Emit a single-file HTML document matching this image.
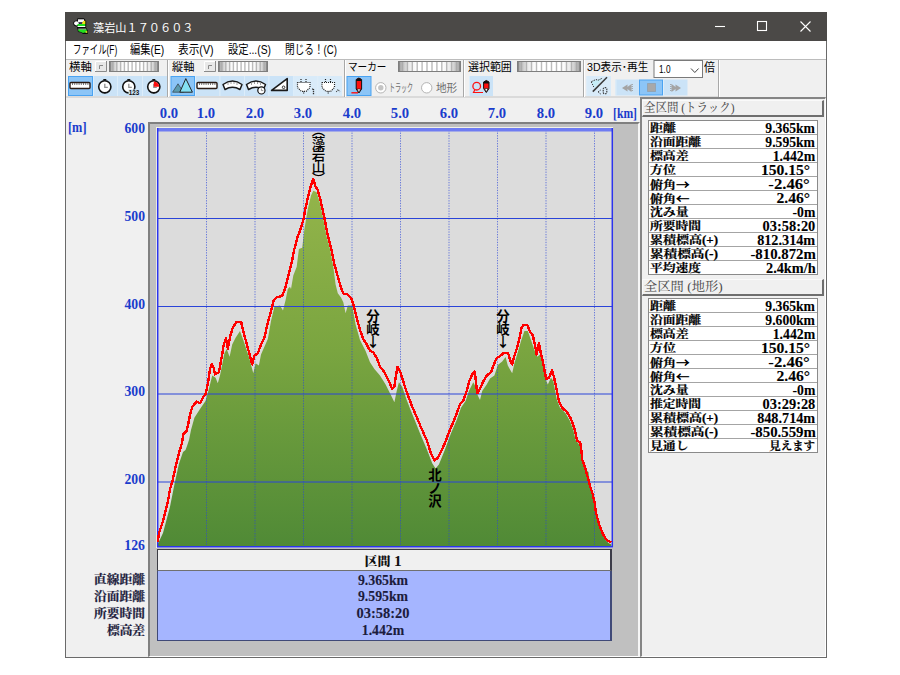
<!DOCTYPE html>
<html lang="ja">
<head>
<meta charset="utf-8">
<title>藻岩山１７０６０３</title>
<style>
html,body{margin:0;padding:0;background:#fff;}
body{width:900px;height:675px;position:relative;overflow:hidden;font-family:"Liberation Sans","Noto Sans CJK JP",sans-serif;}
div,span{box-sizing:border-box;}
.abs{position:absolute;}
#win{position:absolute;left:65px;top:12px;width:762px;height:646px;background:#f0f0f0;border:1px solid #6a6a6a;border-top:none;}
#title{position:absolute;left:65px;top:12px;width:762px;height:29px;background:#4b4947;color:#fff;}
#title .t{left:28px;top:7.500px;font-size:11px;line-height:16px;}
#menu{position:absolute;left:66px;top:41px;width:760px;height:19px;background:#fff;border-bottom:1px solid #bcbcbc;font-size:12px;line-height:18px;color:#000;}
#menu span{top:0;}
.f{position:absolute;display:inline-block;white-space:nowrap;transform-origin:0 50%;}
.f.r{transform-origin:100% 50%;}
.f.c{transform-origin:50% 50%;}
.glabel{top:60px;font-size:11px;line-height:14px;color:#000;}
.ser{font-family:"Liberation Serif","Noto Serif CJK JP","Noto Serif CJK SC",serif;font-weight:bold;}
.ax{color:#1a3ccc;font-size:14px;line-height:14px;}
#frame{position:absolute;left:148px;top:122px;width:492px;height:535px;background:#c0c0c0;border-left:2px solid #808080;border-top:2px solid #808080;border-right:2px solid #f6f6f6;border-bottom:1px solid #fff;}
#plot{position:absolute;left:155.500px;top:126.800px;width:457.500px;height:421.200px;background:#dcdcdc;border-top:1.200px solid #f2f2e6;border-left:1.500px solid #f2f2e6;}
#kukan{position:absolute;left:156.500px;top:548.500px;width:455.200px;height:22.500px;background:#f0f0f0;border-top:1.500px solid #3c3c44;border-left:1.500px solid #3c3c44;border-right:2px solid #3c3c48;border-bottom:1px solid #707070;}
#blue{position:absolute;left:156.500px;top:571px;width:455.200px;height:69.500px;background:#a5b5ff;border-left:1.500px solid #404a78;border-right:2px solid #404a78;border-bottom:1.500px solid #404a78;}
.bv{left:383.300px;-webkit-text-stroke:0.100px #1c1c3c;font-size:14px;line-height:16px;color:#1c1c3c;}
.bl{right:754.500px;-webkit-text-stroke:0.220px #1c1c3c;font-weight:700;font-size:12px;line-height:16px;color:#1c1c3c;}
#rp{position:absolute;left:640px;top:97px;width:186px;height:560px;border-left:2px solid #858585;border-top:2px solid #858585;border-right:1.500px solid #fff;border-bottom:1.500px solid #fff;}
.hd{position:absolute;left:642px;width:182px;height:17px;background:#f0f0f0;border-top:1px solid #fafafa;border-left:1px solid #fafafa;border-right:2px solid #6e6e6e;border-bottom:2px solid #6e6e6e;}
.hdt{left:643.500px;font-family:"Liberation Serif","Noto Serif CJK JP","Noto Serif CJK SC",serif;font-size:12.500px;line-height:15px;color:#4a4a4a;}
.tb{position:absolute;left:648px;width:170px;height:155px;border:1px solid #8a8a8a;background:#fff;}
.tb i{display:block;height:14px;border-bottom:1px solid #a4a4a4;box-sizing:border-box;}
.cj{font-family:"Noto Serif CJK JP","Noto Serif CJK SC",serif;-webkit-text-stroke:0.600px #000;}
.tk{left:649.600px;-webkit-text-stroke:0.220px #000;font-weight:700;font-size:11.500px;line-height:16px;color:#000;}
.tv{right:84.600px;-webkit-text-stroke:0.100px #000;font-size:14px;line-height:16px;color:#000;}
.ar{font-family:"Noto Sans CJK JP","Liberation Sans",sans-serif;}
.lbl{font-family:"Liberation Sans","Noto Sans CJK JP",sans-serif;font-weight:bold;font-size:13.500px;fill:#000;}
</style>
</head>
<body>
<div id="win"></div>
<div id="title">
<svg class="abs" style="left:7px;top:5px" width="18" height="18" viewBox="72 17 18 18"><path d="M77.500 18.300L84 18.300L86.200 21V28.200H77V26.600Q73 26 73.200 23Q73.500 20.400 77 20.400Z" fill="#0a0a0a"/><ellipse cx="76.400" cy="23.300" rx="2.300" ry="2.100" fill="#fff"/><rect x="78" y="19.300" width="6" height="3" fill="#f4f4f4"/><path d="M83 21.300L85.300 20.500V24H81.800Z" fill="#f0e010"/><path d="M79.500 22.500h2.500v1.500h-2.500z" fill="#303060"/><rect x="77.500" y="24" width="7.800" height="2.100" fill="#20e020"/><rect x="77.500" y="26" width="7.800" height="1" fill="#f4fff4"/><path d="M77.300 28H86.500L88 31V33.900L83 33.900L81 32.600L78 32Z" fill="#0a0a0a"/><rect x="78.300" y="28.700" width="7.900" height="0.900" fill="#f4fff4"/><path d="M78.300 29.600H86.500L87 31.300V33L85 32.500L83 33L81 32L78.300 31.300Z" fill="#20e020"/><path d="M85.500 31H87.300V33.200L85.500 32.500Z" fill="#c8d020"/></svg>
<span class="t f" style="transform:scaleX(1.0152)">藻岩山１７０６０３</span>
<svg class="abs" style="left:640px;top:0" width="122" height="29" viewBox="0 0 122 29"><g stroke="#fff" stroke-width="1.1" fill="none"><path d="M10 14.5h10"/><rect x="52.5" y="9.5" width="9" height="9"/><path d="M95.500 9.500l10 10M105.500 9.500l-10 10"/></g></svg>
</div>
<div id="menu">
<span class="f" style="left:6.500px;transform:scaleX(0.6980)">ファイル(F)</span>
<span class="f" style="left:63.700px;transform:scaleX(0.8575)">編集(E)</span>
<span class="f" style="left:112.400px;transform:scaleX(0.8900)">表示(V)</span>
<span class="f" style="left:162px;transform:scaleX(0.8600)">設定...(S)</span>
<span class="f" style="left:219px;transform:scaleX(0.8041)">閉じる！(C)</span>
</div>

<!-- toolbar groups -->
<svg class="abs" style="left:0;top:0" width="900" height="100" viewBox="0 0 900 100">
<defs><linearGradient id="gr" x1="0" y1="0" x2="1" y2="0"><stop offset="0" stop-color="#808080"/><stop offset="0.040" stop-color="#b0b0b0"/><stop offset="0.160" stop-color="#e8e8e8"/><stop offset="0.300" stop-color="#ffffff"/><stop offset="0.700" stop-color="#ffffff"/><stop offset="0.840" stop-color="#e8e8e8"/><stop offset="0.960" stop-color="#b0b0b0"/><stop offset="1" stop-color="#808080"/></linearGradient></defs>
<path d="M66 97H718" stroke="#c4c4c4"/>
<path d="M167.5 60V97" stroke="#a8a8a8"/><path d="M168.5 60V97" stroke="#fff"/>
<path d="M344.5 60V97" stroke="#a8a8a8"/><path d="M345.5 60V97" stroke="#fff"/>
<path d="M463.5 60V97" stroke="#a8a8a8"/><path d="M464.5 60V97" stroke="#fff"/>
<path d="M583.5 60V97" stroke="#a8a8a8"/><path d="M584.5 60V97" stroke="#fff"/>
<path d="M718.5 60V97" stroke="#a8a8a8"/><path d="M719.5 60V97" stroke="#fff"/>
<rect x="95" y="61" width="12" height="11" fill="#e8e8e8"/><path d="M95.5 72V61.5H107" stroke="#fff" fill="none"/><path d="M106.5 61V71.500H95" stroke="#8a8a8a" fill="none"/><path d="M99.5 69V65.500H103" stroke="#8a8a8a" fill="none"/>
<rect x="109" y="61" width="50" height="11" fill="url(#gr)" stroke="none"/><path d="M112.9 62V71M116.8 62V71M120.6 62V71M124.4 62V71M128.2 62V71M132.1 62V71M135.9 62V71M139.8 62V71M143.6 62V71M147.4 62V71M151.2 62V71M155.1 62V71" stroke="#a4a4a4" stroke-width="1.400" fill="none" opacity="0.750"/><rect x="109.5" y="61.5" width="49" height="10" fill="none" stroke="#7e7e7e" stroke-width="1"/><path d="M110.5 62V71M157.5 62V71" stroke="#8a8a8a" stroke-width="1"/>
<rect x="204" y="61" width="12" height="11" fill="#e8e8e8"/><path d="M204.5 72V61.5H216" stroke="#fff" fill="none"/><path d="M215.5 61V71.500H204" stroke="#8a8a8a" fill="none"/><path d="M208.5 69V65.500H212" stroke="#8a8a8a" fill="none"/>
<rect x="218" y="61" width="50" height="11" fill="url(#gr)" stroke="none"/><path d="M221.9 62V71M225.8 62V71M229.6 62V71M233.4 62V71M237.2 62V71M241.1 62V71M244.9 62V71M248.8 62V71M252.6 62V71M256.4 62V71M260.2 62V71M264.1 62V71" stroke="#a4a4a4" stroke-width="1.400" fill="none" opacity="0.750"/><rect x="218.5" y="61.5" width="49" height="10" fill="none" stroke="#7e7e7e" stroke-width="1"/><path d="M219.5 62V71M266.5 62V71" stroke="#8a8a8a" stroke-width="1"/>
<rect x="398" y="61" width="63" height="11" fill="url(#gr)" stroke="none"/><path d="M402.5 62V71M407.4 62V71M412.3 62V71M417.2 62V71M422.1 62V71M427.0 62V71M432.0 62V71M436.9 62V71M441.8 62V71M446.7 62V71M451.6 62V71M456.5 62V71" stroke="#a4a4a4" stroke-width="1.400" fill="none" opacity="0.750"/><rect x="398.5" y="61.5" width="62" height="10" fill="none" stroke="#7e7e7e" stroke-width="1"/><path d="M399.5 62V71M459.5 62V71" stroke="#8a8a8a" stroke-width="1"/>
<rect x="517" y="61" width="64" height="11" fill="url(#gr)" stroke="none"/><path d="M521.5 62V71M526.5 62V71M531.5 62V71M536.5 62V71M541.5 62V71M546.5 62V71M551.5 62V71M556.5 62V71M561.5 62V71M566.5 62V71M571.5 62V71M576.5 62V71" stroke="#a4a4a4" stroke-width="1.400" fill="none" opacity="0.750"/><rect x="517.5" y="61.5" width="63" height="10" fill="none" stroke="#7e7e7e" stroke-width="1"/><path d="M518.5 62V71M579.5 62V71" stroke="#8a8a8a" stroke-width="1"/>
<rect x="68.5" y="76.5" width="24" height="19" fill="#8cc5f7" stroke="#4aa3f2"/>
<rect x="93" y="76" width="24" height="20" fill="#cbe3f7"/><path d="M93.5 76V96" stroke="#dcedfa"/>
<rect x="117" y="76" width="25" height="20" fill="#cbe3f7"/><path d="M117.5 76V96" stroke="#dcedfa"/>
<rect x="142" y="76" width="25" height="20" fill="#cbe3f7"/><path d="M142.5 76V96" stroke="#dcedfa"/>
<rect x="70" y="82.500" width="20" height="6" rx="1" fill="#fff" stroke="#2a1a14" stroke-width="1.400"/><path d="M72.5 83V85M74.7 83V85M76.9 83V85M79.1 83V85M81.3 83V85M83.5 83V85M85.7 83V85M87.9 83V85" stroke="#555" stroke-width="0.800"/>
<path d="M103.3 79.0h3v1.500h-3z" fill="#111"/><circle cx="104.8" cy="86.8" r="6.100" fill="#fff" stroke="#111" stroke-width="1.600"/><path d="M104.8 83.8V87.3H107.8" stroke="#909090" stroke-width="1.300" fill="none"/><path d="M103.8 92.69999999999999h2" stroke="#111" stroke-width="1.200"/>
<path d="M127.30000000000001 79.0h3v1.500h-3z" fill="#111"/><circle cx="128.8" cy="86.8" r="6.100" fill="#fff" stroke="#111" stroke-width="1.600"/><path d="M128.8 83.8V87.3H131.8" stroke="#909090" stroke-width="1.300" fill="none"/><path d="M127.80000000000001 92.69999999999999h2" stroke="#111" stroke-width="1.200"/>
<path d="M152.3 79.0h3v1.500h-3z" fill="#111"/><circle cx="153.8" cy="86.8" r="6.100" fill="#fff" stroke="#111" stroke-width="1.600"/><path d="M153.8 83.8V87.3H156.8" stroke="#909090" stroke-width="1.300" fill="none"/><path d="M152.8 92.69999999999999h2" stroke="#111" stroke-width="1.200"/>
<rect x="128.500" y="89.500" width="11" height="5.800" fill="#cbe3f7"/><text x="139.300" y="95" text-anchor="end" font-family="Liberation Sans,sans-serif" font-weight="bold" font-size="7.500" fill="#111" textLength="10.500" lengthAdjust="spacingAndGlyphs">123</text>
<path d="M153.800 86.800V81.400A5.400 5.400 0 0 1 159.200 86.800Z" fill="#ff1010"/>
<rect x="171.0" y="76.5" width="23.5" height="19" fill="#8cc5f7" stroke="#4aa3f2"/>
<rect x="195" y="76" width="24.5" height="20" fill="#cbe3f7"/><path d="M195.5 76V96" stroke="#dcedfa"/>
<rect x="219.5" y="76" width="24.5" height="20" fill="#cbe3f7"/><path d="M220.0 76V96" stroke="#dcedfa"/>
<rect x="244" y="76" width="24.5" height="20" fill="#cbe3f7"/><path d="M244.5 76V96" stroke="#dcedfa"/>
<rect x="268.5" y="76" width="24.5" height="20" fill="#cbe3f7"/><path d="M269.0 76V96" stroke="#dcedfa"/>
<rect x="293" y="76" width="24.5" height="20" fill="#d9ebf9"/><path d="M293.5 76V96" stroke="#dcedfa"/>
<rect x="317.5" y="76" width="24.5" height="20" fill="#d9ebf9"/><path d="M318.0 76V96" stroke="#dcedfa"/>
<path d="M172.600 92.200L178 83.800L183.500 92.200Z" fill="#5c9cb0" stroke="#3a4a55" stroke-width="0.800"/><path d="M179.800 92.200L185.800 78.600L192.400 92.200Z" fill="#84e0f2" stroke="#222" stroke-width="1"/>
<rect x="197" y="82.500" width="20" height="6" rx="1" fill="#fff" stroke="#2a1a14" stroke-width="1.400"/><path d="M199.5 83V85M201.7 83V85M203.9 83V85M206.1 83V85M208.3 83V85M210.5 83V85M212.7 83V85M214.9 83V85" stroke="#555" stroke-width="0.800"/>
<path d="M223 84.5Q232.5 77.5 242 84.5L240 89.5Q232.5 85 225 89.5Z" fill="#fff" stroke="#1a1a1a" stroke-width="1.500" stroke-linejoin="round"/><path d="M228 83v2M231 82v2M234 82v2M237 83v2" stroke="#888" stroke-width="0.800"/>
<path d="M246.5 84.5Q256.0 77.5 265.5 84.5L263.5 89.5Q256.0 85 248.5 89.5Z" fill="#fff" stroke="#1a1a1a" stroke-width="1.500" stroke-linejoin="round"/><path d="M251.5 83v2M254.5 82v2M257.5 82v2M260.5 83v2" stroke="#888" stroke-width="0.800"/>
<circle cx="261.400" cy="90.400" r="3.600" fill="#fff" stroke="#111" stroke-width="1.200"/><path d="M261.400 88.500V90.600H263.300" stroke="#888" stroke-width="0.900" fill="none"/>
<path d="M271.600 90.400H287.200V78.600Z" fill="#fff" stroke="#1a1a1a" stroke-width="1.600" stroke-linejoin="round"/><circle cx="283.600" cy="87.300" r="1.300" fill="#fff" stroke="#222" stroke-width="0.900"/>
<path d="M301.0 79v3.500M306.0 79v3.500" stroke="#222" stroke-width="1.200" stroke-dasharray="1 1"/><path d="M297.5 82.500h12.500v5l-3.800 3.800h-4.900L297.5 87.500z" fill="#fff" stroke="#222" stroke-width="1.200" stroke-dasharray="1 1"/><path d="M303.7 91.500v2.500" stroke="#222" stroke-width="1.200" stroke-dasharray="1 1"/>
<path d="M325.5 79v3.500M330.5 79v3.500" stroke="#222" stroke-width="1.200" stroke-dasharray="1 1"/><path d="M322 82.500h12.500v5l-3.800 3.800h-4.900L322 87.500z" fill="#fff" stroke="#222" stroke-width="1.200" stroke-dasharray="1 1"/><path d="M328.2 91.500v2.500" stroke="#222" stroke-width="1.200" stroke-dasharray="1 1"/>
<path d="M312.300 89.500l1.200-1V94.500" fill="none" stroke="#333" stroke-width="1.300" stroke-dasharray="1.200 0.800"/><path d="M336.300 92l1.800-2.600l1.800 2.600" stroke="#444" stroke-width="1.100" fill="none" stroke-dasharray="1 1"/>
<rect x="347.0" y="76.5" width="24" height="19" fill="#8cc5f7" stroke="#4aa3f2"/>
<path d="M356.2 79.5V89L358.9 93L361.59999999999997 89V79.5Q358.9 76.5 356.2 79.5Z" fill="#ff1010" stroke="#111" stroke-width="1"/><path d="M356.2 80Q358.9 76.5 361.59999999999997 80V81H356.2Z" fill="#111"/><path d="M357.2 89L358.9 92.5L360.59999999999997 89Z" fill="#fff" stroke="#111" stroke-width="0.600"/>
<path d="M351.400 92.800H358" stroke="#ff1010" stroke-width="1.400"/>
<circle cx="380.800" cy="87.800" r="5.200" fill="#fff" stroke="#b4b4b4" stroke-width="1"/><circle cx="380.800" cy="87.800" r="2.700" fill="#c4c4c4"/>
<circle cx="426.700" cy="87.800" r="5.200" fill="#fff" stroke="#b4b4b4" stroke-width="1"/>
<rect x="469" y="76" width="24" height="20" fill="#cbe3f7"/><path d="M469.5 76V96" stroke="#dcedfa"/>
<circle cx="476.700" cy="86.200" r="3.800" fill="none" stroke="#ff1010" stroke-width="1.300"/><path d="M475 89.500L473.500 92.500H483" fill="none" stroke="#ff1010" stroke-width="1.200"/>
<path d="M483.6 82.0V88.5L486.3 92.5L489.0 88.5V82.0Q486.3 79.0 483.6 82.0Z" fill="#ff1010" stroke="#111" stroke-width="1"/><path d="M483.6 82.5Q486.3 79.0 489.0 82.5V83.5H483.6Z" fill="#111"/><path d="M484.6 88.5L486.3 92.0L488.0 88.5Z" fill="#fff" stroke="#111" stroke-width="0.600"/>
<rect x="586.5" y="76" width="24.5" height="20" fill="#d9ebf9"/><path d="M587.0 76V96" stroke="#dcedfa"/>
<path d="M591.300 81.700L602.700 78.300L594.500 88Z" fill="#c6eef8"/><path d="M591.300 81.700L596 79.500L598 80.300L602.700 78" stroke="#333" stroke-width="1" fill="none" stroke-dasharray="1.500 1"/><path d="M591.300 82L594 87.500" stroke="#444" stroke-width="1" stroke-dasharray="1.200 1"/><path d="M592.800 91.600L607 77.300" stroke="#3a3a3a" stroke-width="1.500"/><path d="M600.700 90l-2.800 2l2.800 2" stroke="#333" stroke-width="1" fill="none" stroke-dasharray="1.200 0.800"/><rect x="603.200" y="87.600" width="3.600" height="6.200" rx="1.500" fill="none" stroke="#333" stroke-width="1.100" stroke-dasharray="1.500 0.800"/>
<rect x="615.5" y="79.5" width="23.5" height="16" fill="#cbe3f7"/><path d="M616.0 79.5V95.5" stroke="#dcedfa"/>
<rect x="639.5" y="80.0" width="23" height="15" fill="#8cc5f7" stroke="#4aa3f2"/>
<rect x="663" y="79.5" width="24.5" height="16" fill="#cbe3f7"/><path d="M663.5 79.5V95.5" stroke="#dcedfa"/>
<path d="M622 88L627.500 84.500V91.500Z" fill="#a4a4a4"/><path d="M626 88L631.500 84V92Z" fill="#a4a4a4"/><path d="M632.200 84V92" stroke="#9a9a9a" stroke-width="1.200" stroke-dasharray="1 1"/>
<rect x="647.500" y="83.500" width="8" height="8" fill="#a8a8a8" stroke="#888" stroke-width="0.800" stroke-dasharray="1 1"/>
<path d="M681 88L675.500 84.500V91.500Z" fill="#a4a4a4"/><path d="M677 88L671.500 84V92Z" fill="#a4a4a4"/><path d="M670.800 84V92" stroke="#9a9a9a" stroke-width="1.200" stroke-dasharray="1 1"/>
<rect x="654" y="60.500" width="48.500" height="17" fill="#fff" stroke="#7a7a7a"/><path d="M691 68.500l3.800 4l3.800-4" fill="none" stroke="#444" stroke-width="1"/>
</svg>
<span class="glabel f" style="left:69.400px;transform:scaleX(1.0364)">横軸</span>
<span class="glabel f" style="left:172px;transform:scaleX(1.0227)">縦軸</span>
<span class="glabel f" style="left:347.800px;transform:scaleX(0.8727)">マーカー</span>
<span class="glabel f" style="left:468px;transform:scaleX(0.9955)">選択範囲</span>
<span class="glabel f" style="left:587px;transform:scaleX(0.9644)">3D表示･再生</span>
<span class="glabel f" style="left:704px;top:61px;font-size:12px;transform:scaleX(0.9155)">倍</span>
<span class="glabel f" style="left:659px;top:62px;transform:scaleX(0.7518)">1.0</span>
<span class="glabel f" style="left:389.200px;top:81px;color:#6d6d6d;transform:scaleX(0.5455)">トラック</span>
<span class="glabel f" style="left:435.500px;top:81px;color:#6d6d6d;transform:scaleX(0.9636)">地形</span>

<!-- axis labels -->
<span class="ax ser f" style="left:68px;top:120.800px;transform:scaleX(0.8810)">[m]</span>
<span class="ax ser f" style="left:612.800px;top:107px;transform:scaleX(0.8339)">[km]</span>
<span class="ax ser f r" style="right:755.0px;top:121.500px;transform:scaleX(0.9762)">600</span>
<span class="ax ser f r" style="right:755.0px;top:209.5px;transform:scaleX(0.9762)">500</span>
<span class="ax ser f r" style="right:755.0px;top:297.5px;transform:scaleX(0.9762)">400</span>
<span class="ax ser f r" style="right:755.0px;top:385.0px;transform:scaleX(0.9762)">300</span>
<span class="ax ser f r" style="right:755.0px;top:473.0px;transform:scaleX(0.9762)">200</span>
<span class="ax ser f r" style="right:755.0px;top:538.500px;transform:scaleX(0.9857)">126</span>
<span class="ax ser f c" style="left:169.2px;top:107px;transform:translateX(-50%) scaleX(1.0457)">0.0</span>
<span class="ax ser f c" style="left:206.1px;top:107px;transform:translateX(-50%) scaleX(1.0457)">1.0</span>
<span class="ax ser f c" style="left:254.6px;top:107px;transform:translateX(-50%) scaleX(1.0457)">2.0</span>
<span class="ax ser f c" style="left:303.1px;top:107px;transform:translateX(-50%) scaleX(1.0457)">3.0</span>
<span class="ax ser f c" style="left:351.6px;top:107px;transform:translateX(-50%) scaleX(1.0457)">4.0</span>
<span class="ax ser f c" style="left:400.1px;top:107px;transform:translateX(-50%) scaleX(1.0457)">5.0</span>
<span class="ax ser f c" style="left:448.6px;top:107px;transform:translateX(-50%) scaleX(1.0457)">6.0</span>
<span class="ax ser f c" style="left:497.1px;top:107px;transform:translateX(-50%) scaleX(1.0457)">7.0</span>
<span class="ax ser f c" style="left:545.6px;top:107px;transform:translateX(-50%) scaleX(1.0457)">8.0</span>
<span class="ax ser f c" style="left:594.1px;top:107px;transform:translateX(-50%) scaleX(1.0457)">9.0</span>

<div id="frame"></div>
<div id="plot"></div>
<svg class="abs" style="left:0;top:0" width="900" height="675" viewBox="0 0 900 675">
<defs><linearGradient id="gg" x1="0" y1="190" x2="0" y2="546" gradientUnits="userSpaceOnUse"><stop offset="0" stop-color="#93b44a"/><stop offset="0.45" stop-color="#7aa540"/><stop offset="1" stop-color="#508a36"/></linearGradient></defs>
<polygon fill="url(#gg)" points="157.8,544 163,533 170,506.7 174.4,484.4 178.9,464 183,452 185.5,450 187,446 189,440 191,430 194.4,417.8 200,408.9 205.5,401 208.9,388.9 212.2,375.6 215.6,377.8 217.8,383.3 220,375.6 224.4,353.3 226.7,348.9 229.6,356.7 232.2,344.4 235.6,337.8 240,331 243.3,340 248.9,356.7 253.3,373.3 255.6,363.3 258.9,365.6 261,354.4 267.8,338.9 271,321 274.4,306.7 280,305.6 283,310.5 285.6,300 287.8,288.9 290,286.7 291,288.9 293.3,275.6 296.7,266.7 298.9,248.9 302.2,247.8 304.4,228.9 307.8,208.9 311,195.6 313.3,190.7 316.7,192.2 320,203.3 323.3,218.9 326.7,236.7 330,248.9 333.3,266.7 335.6,284.4 337.8,293.3 341,297.5 343.3,302.2 345.6,313.3 347.8,305.6 352.2,305.6 355.6,324.4 360,340 365.6,351 370,362.2 374.4,368.9 380,375.6 385.6,384.4 390,393.3 394.4,402.2 396.7,391 398.9,382.2 402.2,386.7 406.7,400 411,411 415.6,422.2 420,433.3 426.7,448.9 432.2,463.3 435.6,468.4 438.9,464.4 444.4,451 451,433.3 456.7,420 461,407.8 465.6,401 468.9,391 473.3,382.2 475.6,386.7 477.8,395.6 480,400 482.2,391 486.7,384.4 490,378.4 494.4,375.6 497.8,365 502.2,361.5 505.6,357 507.8,365.6 512.2,373.3 514.4,363.3 517.8,352.2 521,341 524.4,331 527.8,331 531,340 534.4,350 537.3,356.7 540,354.4 543.3,365.6 545.6,378.9 547.8,384.4 551,377.8 553.3,381 556.7,398.9 560,407.8 565.6,413.3 570,421 573.3,430 575.6,440 578,443 580,446 581,455 583,464 586,470 588.5,472 590,486 592,494 594,503 595.5,513 597.5,521 599.5,528 602.5,535 605.5,540 608.5,543 611.3,544.5 611.3,546 157.8,546"/>
<g stroke="#2a44d8" stroke-width="1" fill="none">
<path d="M157 218.500H612M157 306.500H612M157 394H612M157 482H612"/>
<path stroke-dasharray="1.300 1.300" stroke-opacity="0.650" d="M206.500 130V546M255 130V546M303.500 130V546M352 130V546M400.500 130V546M449 130V546M497.500 130V546M546 130V546M594.500 130V546"/>
</g>
<g fill="none"><path stroke="#6f7cf2" stroke-width="3.400" d="M157 129.800H613"/><path stroke="#2c34ee" stroke-width="1.500" d="M157.700 128V547.400M157 546.650H613M612.300 128V547.400"/></g>
<polyline fill="none" stroke="#ff0000" stroke-width="2.400" stroke-linejoin="round" shape-rendering="crispEdges" points="157.8,542.2 158.9,533.3 163.3,520 167.8,502.2 170,488.9 172.2,482.2 175.6,466.7 178.9,453.3 182.2,442.2 183.3,434.4 186.7,431 188,425 190,415 192.2,407 196.7,401.5 200,403.3 203.3,397 205.5,394.4 208.2,382.2 210,368.9 211.8,364 213.8,367.8 214.9,374.4 218.9,372.2 221.6,357.8 223.8,344.4 226,338.2 227.8,348.9 230.4,335.6 232.7,327.8 236.7,321.8 241.1,321.8 244.4,335.6 247.8,347.8 250.4,357.8 252.2,364.4 254.4,355.6 257.8,353.3 261.1,344.4 264.4,337.8 267.8,322.2 271.1,311.1 273.3,301.1 276.7,297.3 282.2,296 284.9,289 286.7,282 288.9,273.3 292.2,260 294.4,248.9 297.3,237.8 300,231 303.3,220 305.6,207.8 308.9,193.3 311,185.6 313.3,178.9 315.6,186.7 317.8,190 321,202.2 324.4,217.8 327.8,235.6 331,247.8 334.4,264.4 337.8,276.5 341,287.5 343.3,293.5 348,294.6 351.5,299 353.5,305 354.8,310 356.7,317.8 360,330 363.3,338.9 366.7,344.4 370,350.7 373.3,352.2 376.7,357.8 380,366.7 384.4,372.2 388.9,381 392.2,388.9 394.4,386.7 396,375.6 397.3,366.7 400,371 402.2,377.8 405.6,388.9 408.9,397.8 412.2,406.7 415.6,414.5 418.9,422.2 421,427.5 426.7,440 431,453.3 434.4,460.4 437.8,457.8 444.4,444.4 450,429.5 453.3,422.2 456.7,413.3 460,404.4 463.3,400.5 466.7,391 468.9,382.2 472.2,374.4 474.9,371.6 476.2,384.4 477.3,393.3 480,388.5 483.3,381.5 486.7,375.6 491,372.2 494.4,363.3 496.7,357.8 500,356.2 503.3,353.3 508,352.8 510.3,360.5 512.2,364.4 514.4,356 517,348 519.4,339 521.5,328 523.5,325 527.3,325 530,331.5 532.9,335.6 535,345.6 536.7,354.4 538.9,343.3 540.4,351 542.7,361 544.4,370 546.2,378.9 548.9,377.8 552.2,370.4 554.4,378.9 556.7,390 558.9,401 562.2,408 566.7,411.5 570,417 573,424 575.3,432 577,440.7 580.2,442.6 581.2,449 582.2,459.4 585.4,468.8 587.4,476 589.5,484.3 592.6,493.7 594.7,503 595.7,511.3 597.8,519.6 599.9,526.8 603,534 606,539.3 609.2,541.4 611.3,542.4"/>
<g class="lbl" text-anchor="middle">
<text x="373" y="321">分</text><text x="373" y="334">岐</text><text x="373" y="347" class="ar">↓</text>
<text x="503" y="321">分</text><text x="503" y="334">岐</text><text x="503" y="347" class="ar">↓</text>
<text x="435" y="480">北</text><text x="435" y="493">ノ</text><text x="435" y="506">沢</text>
<text x="318.500" y="134.500" font-weight="500">︵</text><text x="318.500" y="148" font-weight="500">藻</text><text x="318.500" y="160" font-weight="500">岩</text><text x="318.500" y="172" font-weight="500">山</text><text x="318.500" y="183.500" font-weight="500">︶</text>
</g>
</svg>
<div id="kukan"></div>
<span class="ser f c" style="left:382.500px;top:554px;font-weight:900;font-size:12px;line-height:16px;color:#111;transform:translateX(-50%) scaleX(1.0877)">区間 <span style="font-size:14px">1</span></span>
<div id="blue"></div>
<span class="bv ser f c" style="top:572.500px;transform:translateX(-50%) scaleX(0.9852)">9.365km</span>
<span class="bv ser f c" style="top:589.300px;transform:translateX(-50%) scaleX(0.9852)">9.595km</span>
<span class="bv ser f c" style="top:605.500px;transform:translateX(-50%) scaleX(1.0326)">03:58:20</span>
<span class="bv ser f c" style="top:622.500px;transform:translateX(-50%) scaleX(0.9844)">1.442m</span>
<span class="bl ser f r" style="top:572.1px;transform:scaleX(1.0622)">直線距離</span>
<span class="bl ser f r" style="top:589.1px;transform:scaleX(1.0622)">沿面距離</span>
<span class="bl ser f r" style="top:605.7px;transform:scaleX(1.0622)">所要時間</span>
<span class="bl ser f r" style="top:622.5px;transform:scaleX(1.0551)">標高差</span>

<!-- right panel -->
<div id="rp"></div>
<div class="hd" style="top:100px"></div>
<span class="hdt f" style="top:100.500px;transform:scaleX(0.9179)">全区間 (トラック)</span>
<div class="tb" style="top:120px"><i></i><i></i><i></i><i></i><i></i><i></i><i></i><i></i><i></i><i></i></div>
<span class="tk ser f" style="top:120.1px;transform:scaleX(1.1217)">距離</span>
<span class="tv ser f r" style="top:120.6px;transform:scaleX(0.9734)">9.365km</span>
<span class="tk ser f" style="top:134.1px;transform:scaleX(1.1109)">沿面距離</span>
<span class="tv ser f r" style="top:134.6px;transform:scaleX(0.9734)">9.595km</span>
<span class="tk ser f" style="top:148.1px;transform:scaleX(1.1159)">標高差</span>
<span class="tv ser f r" style="top:148.6px;transform:scaleX(0.9844)">1.442m</span>
<span class="tk ser f" style="top:162.1px;transform:scaleX(1.1217)">方位</span>
<span class="tv ser f r" style="top:162.6px;right:90.2px;transform:scaleX(1.1154)">150.15°</span>
<span class="tk ser f" style="top:176.1px;transform:scaleX(1.1362)">俯角<span class="cj">→</span></span>
<span class="tv ser f r" style="top:176.6px;right:90.2px;transform:scaleX(1.1908)">-2.46°</span>
<span class="tk ser f" style="top:190.1px;transform:scaleX(1.1362)">俯角<span class="cj">←</span></span>
<span class="tv ser f r" style="top:190.6px;right:90.2px;transform:scaleX(1.1159)">2.46°</span>
<span class="tk ser f" style="top:204.1px;transform:scaleX(1.1159)">沈み量</span>
<span class="tv ser f r" style="top:204.6px;transform:scaleX(0.9774)">-0m</span>
<span class="tk ser f" style="top:218.1px;transform:scaleX(1.1109)">所要時間</span>
<span class="tv ser f r" style="top:218.6px;transform:scaleX(1.0287)">03:58:20</span>
<span class="tk ser f" style="top:232.1px;transform:scaleX(1.1292)">累積標高(+)</span>
<span class="tv ser f r" style="top:232.6px;transform:scaleX(1.0145)">812.314m</span>
<span class="tk ser f" style="top:246.1px;transform:scaleX(1.1826)">累積標高(-)</span>
<span class="tv ser f r" style="top:246.6px;transform:scaleX(1.0578)">-810.872m</span>
<span class="tk ser f" style="top:260.1px;transform:scaleX(1.1109)">平均速度</span>
<span class="tv ser f r" style="top:260.6px;transform:scaleX(1.0201)">2.4km/h</span>
<div class="hd" style="top:279px"></div>
<span class="hdt f" style="top:279.500px;transform:scaleX(1.0642)">全区間 (地形)</span>
<div class="tb" style="top:298px"><i></i><i></i><i></i><i></i><i></i><i></i><i></i><i></i><i></i><i></i></div>
<span class="tk ser f" style="top:298.1px;transform:scaleX(1.1217)">距離</span>
<span class="tv ser f r" style="top:298.6px;transform:scaleX(0.9734)">9.365km</span>
<span class="tk ser f" style="top:312.1px;transform:scaleX(1.1109)">沿面距離</span>
<span class="tv ser f r" style="top:312.6px;transform:scaleX(0.9734)">9.600km</span>
<span class="tk ser f" style="top:326.1px;transform:scaleX(1.1159)">標高差</span>
<span class="tv ser f r" style="top:326.6px;transform:scaleX(0.9844)">1.442m</span>
<span class="tk ser f" style="top:340.1px;transform:scaleX(1.1217)">方位</span>
<span class="tv ser f r" style="top:340.6px;right:90.2px;transform:scaleX(1.1154)">150.15°</span>
<span class="tk ser f" style="top:354.1px;transform:scaleX(1.1362)">俯角<span class="cj">→</span></span>
<span class="tv ser f r" style="top:354.6px;right:90.2px;transform:scaleX(1.1908)">-2.46°</span>
<span class="tk ser f" style="top:368.1px;transform:scaleX(1.1362)">俯角<span class="cj">←</span></span>
<span class="tv ser f r" style="top:368.6px;right:90.2px;transform:scaleX(1.1159)">2.46°</span>
<span class="tk ser f" style="top:382.1px;transform:scaleX(1.1159)">沈み量</span>
<span class="tv ser f r" style="top:382.6px;transform:scaleX(0.9774)">-0m</span>
<span class="tk ser f" style="top:396.1px;transform:scaleX(1.1109)">推定時間</span>
<span class="tv ser f r" style="top:396.6px;transform:scaleX(1.0287)">03:29:28</span>
<span class="tk ser f" style="top:410.1px;transform:scaleX(1.1292)">累積標高(+)</span>
<span class="tv ser f r" style="top:410.6px;transform:scaleX(1.0145)">848.714m</span>
<span class="tk ser f" style="top:424.1px;transform:scaleX(1.1826)">累積標高(-)</span>
<span class="tv ser f r" style="top:424.6px;transform:scaleX(1.0578)">-850.559m</span>
<span class="tk ser f" style="top:438.1px;transform:scaleX(1.1159)">見通し</span>
<span class="tk ser f r" style="top:438.1px;left:auto;right:85.5px;transform:scaleX(0.9935)">見えます</span>
</body>
</html>
